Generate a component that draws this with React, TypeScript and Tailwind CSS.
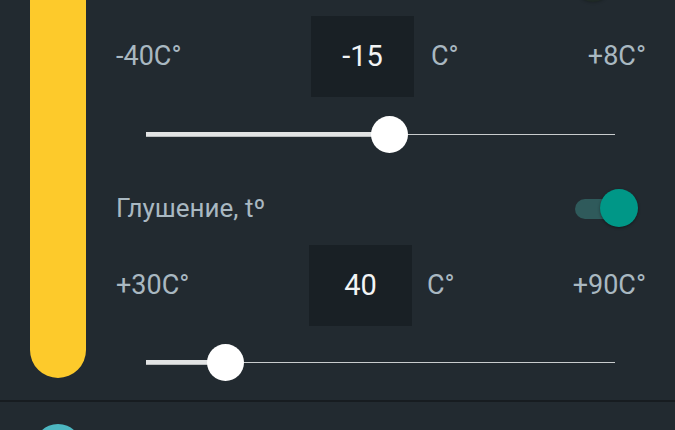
import React from "react";

function Slider({ pos }: { pos: number }) {
  // pos = thumb centre in px from the track start
  return (
    <div className="relative ml-[30px] w-[469px] h-[37px]">
      <div className="absolute left-0 top-[16px] h-[5px] bg-[#e2e4e4] border-b border-[#b9bcbd]" style={{ width: pos }} />
      <div className="absolute right-0 top-[18px] h-px bg-[#c9cccd]" style={{ left: pos }} />
      <div
        className="absolute top-0 w-[37px] h-[37px] rounded-full bg-white"
        style={{ left: pos - 18 }}
      />
    </div>
  );
}

function ValueRow({ min, value, max, lead, unitGap }: { min: string; value: string; max: string; lead: number; unitGap: number }) {
  return (
    <div className="flex items-center h-[81px] text-[27px] text-[#a9b8c1]">
      <div style={{ width: lead }}>{min}</div>
      <div className="w-[103px] h-[81px] bg-[#192025] flex items-center justify-center text-[29px] text-[#f2f4f5]">{value}</div>
      <div style={{ marginLeft: unitGap }}>C°</div>
      <div className="flex-1 text-right">{max}</div>
    </div>
  );
}

export default function App() {
  return (
    <div className="w-[675px] h-[430px] overflow-hidden bg-[#222a30] font-['Roboto',sans-serif]">
      <div className="flex h-[402px] border-b-2 border-[#171c20]">
        <div className="pl-[30px]">
          <div className="w-[56px] h-[378px] bg-[#fdca2b] rounded-b-full" />
        </div>

        <div className="relative flex-1 pl-[30px] pr-[29px] pt-[16px]">
          {/* knob of the switch above, cut off by the top edge */}
          <div className="absolute left-[488px] top-[-36px] w-[38px] h-[38px] rounded-full bg-[#1f2926] shadow-[0_1px_3px_rgba(0,0,0,0.2)]" />

          <ValueRow min="-40C°" value="-15" max="+8C°" lead={195} unitGap={17} />
          <div className="mt-[19px]">
            <Slider pos={243} />
          </div>

          <div className="mt-[36px] flex items-center justify-between h-[38px]">
            <span className="text-[26px] text-[#a9b8c1]">Глушение, tº</span>
            <div className="relative mr-[8px] w-[63px] h-[38px]">
              <div className="absolute left-0 top-[10px] w-[52px] h-[20px] rounded-full bg-[#2f5a5b]" />
              <div className="absolute right-0 top-0 w-[38px] h-[38px] rounded-full bg-[#009787] shadow-[0_1px_3px_rgba(0,0,0,0.4)]" />
            </div>
          </div>

          <div className="mt-[18px]">
            <ValueRow min="+30C°" value="40" max="+90C°" lead={193} unitGap={15} />
          </div>
          <div className="mt-[18px]">
            <Slider pos={79} />
          </div>
        </div>
      </div>

      <div className="pl-[34px] pt-[22px]">
        <div className="w-[48px] h-[48px] rounded-full bg-[#4db7c1]" />
      </div>
    </div>
  );
}
